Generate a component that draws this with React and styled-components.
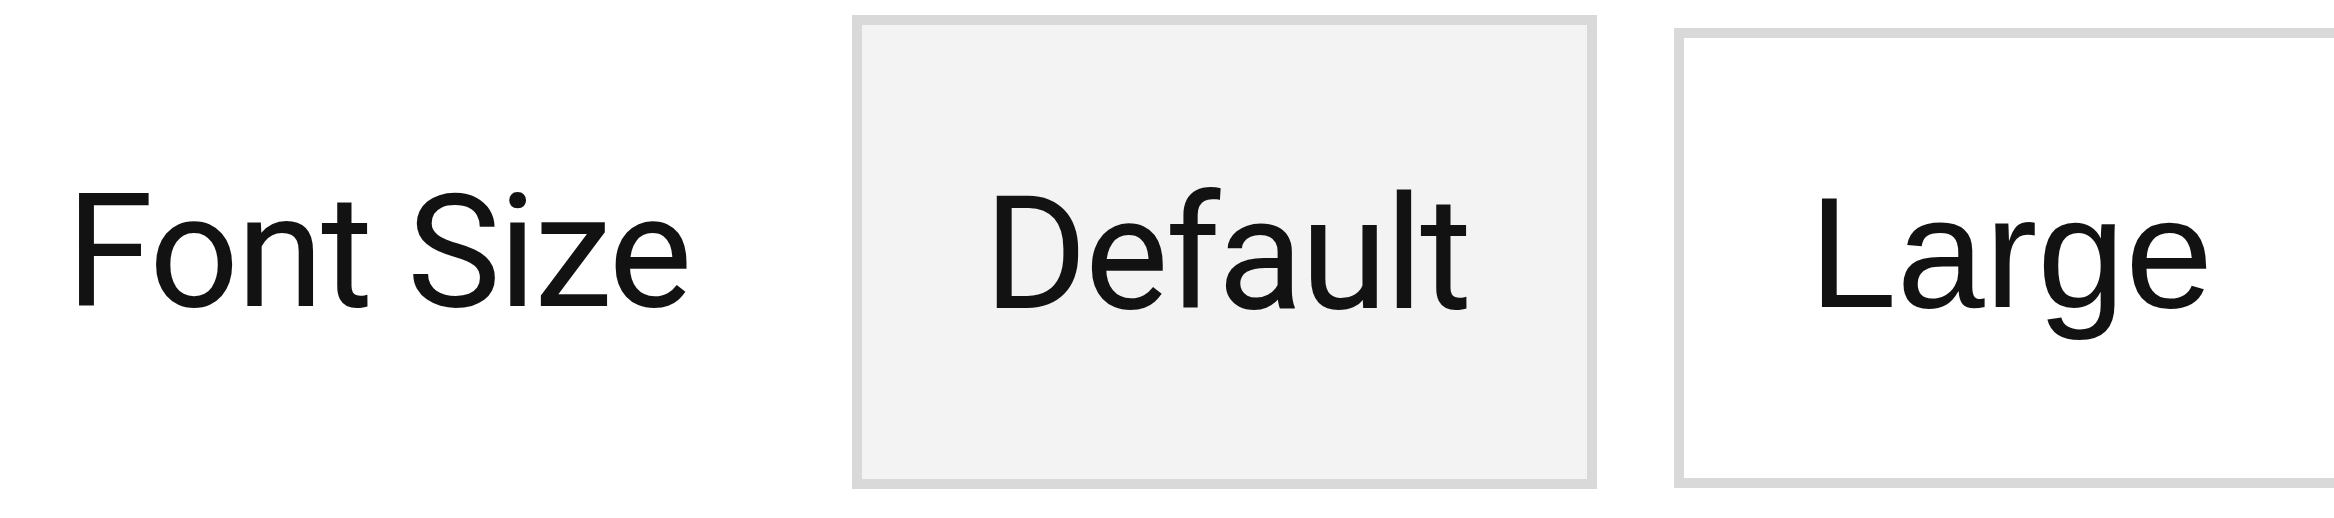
import React from 'react';
import styled, { createGlobalStyle } from 'styled-components';

const GlobalStyle = createGlobalStyle`
  html, body {
    margin: 0;
    padding: 0;
    background: #ffffff;
    overflow: hidden;
  }
  body {
    font-family: Roboto, "Liberation Sans", sans-serif;
    color: #121212;
  }
`;

const options = [
  { label: 'Default', active: true, width: 745, height: 474, top: 15, font: 'Roboto', spacing: -2.9, pad: '3px 0 0 4px' },
  { label: 'Large', active: false, width: 671, height: 460, top: 28, font: '"Liberation Sans"', spacing: 0, pad: '0 0 12px 3px' },
];

const App = () => {
  return (
    <>
      <GlobalStyle />
      <Row>
        <Label>Font Size</Label>
        {options.map(item => (
          <OptionButton
            key={item.label}
            $active={item.active}
            $width={item.width}
            $height={item.height}
            $top={item.top}
            $font={item.font}
            $spacing={item.spacing}
            $pad={item.pad}
          >
            {item.label}
          </OptionButton>
        ))}
      </Row>
    </>
  );
};

export default App;

const Row = styled.div`
  display: grid;
  grid-template-columns: 709px 745px 671px;
  column-gap: 77px;
  align-items: start;
  padding-left: 66px;
  width: 2400px;
  height: 518px;
`;

const Label = styled.div`
  margin-top: 173px;
  font-family: Roboto, sans-serif;
  font-size: 158px;
  line-height: 1;
  letter-spacing: -2.6px;
  white-space: nowrap;
  color: #121212;
`;

const OptionButton = styled.button`
  box-sizing: border-box;
  display: flex;
  align-items: center;
  justify-content: center;
  width: ${p => p.$width}px;
  height: ${p => p.$height}px;
  margin-top: ${p => p.$top}px;
  padding: ${p => p.$pad};
  border: 10px solid #d9d9d9;
  border-radius: 0;
  background: ${p => (p.$active ? '#f3f3f3' : '#ffffff')};
  font-family: ${p => p.$font}, sans-serif;
  font-size: 158px;
  letter-spacing: ${p => p.$spacing}px;
  color: #121212;
  cursor: pointer;
`;
